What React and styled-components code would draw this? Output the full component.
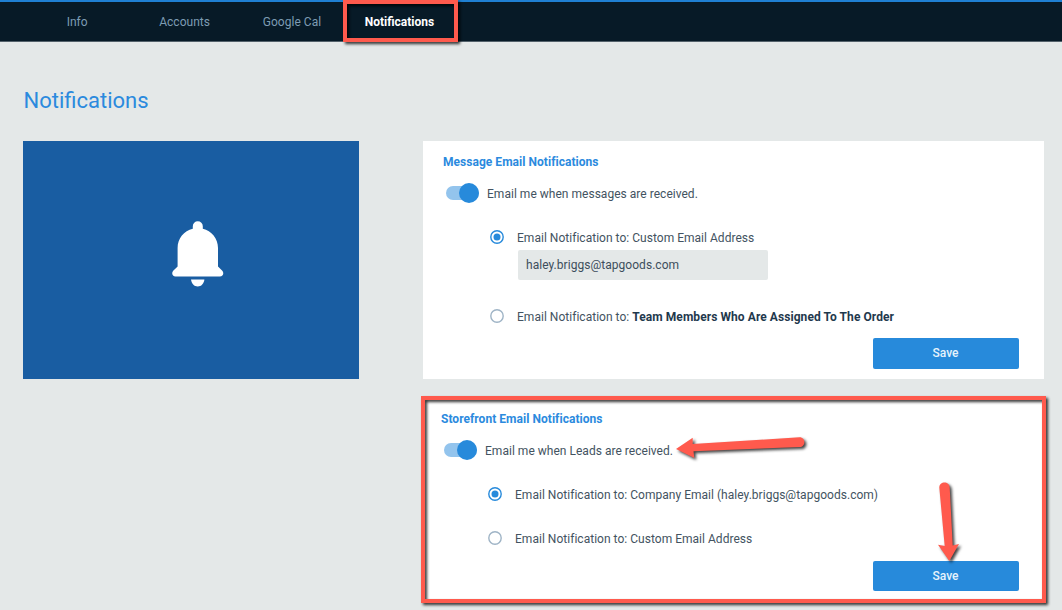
import React, { useState } from "react";
import styled, { createGlobalStyle } from "styled-components";

const GlobalStyle = createGlobalStyle`
  * {
    box-sizing: border-box;
  }
  body {
    margin: 0;
    background: #e4e8e8;
    color: #435361;
    font-family: Roboto, "Liberation Sans", sans-serif;
    font-size: 12px;
    letter-spacing: 0.025px;
    overflow: hidden;
  }
`;

const Page = styled.div`
  position: relative;
  width: 1062px;
  height: 610px;
  overflow: hidden;
`;

const Nav = styled.nav`
  display: flex;
  height: 42px;
  padding-left: 23px;
  background: #071a27;
  border-top: 2px solid #1f80d3;
  border-bottom: 1px solid #53616b;
`;

const NavItem = styled.a`
  position: relative;
  width: 107.4px;
  padding-left: 1px;
  line-height: 40px;
  text-align: center;
  font-size: 12px;
  letter-spacing: ${({ $active }) => ($active ? "0" : "0.03px")};
  font-weight: ${({ $active }) => ($active ? 700 : 400)};
  color: ${({ $active }) => ($active ? "#ffffff" : "#7d9cb3")};
`;

const Highlight = styled.div`
  position: absolute;
  inset: ${({ $inset }) => $inset};
  border: 4px solid #ff5a4d;
  filter: drop-shadow(2px 2px 1.5px rgba(0, 0, 0, 0.8));
  pointer-events: none;
`;

const Title = styled.h1`
  margin: 0;
  padding: 43px 0 0 23.5px;
  height: 99px;
  font-size: 22px;
  font-weight: 400;
  line-height: 32px;
  letter-spacing: 0;
  color: #2b8ade;
`;

const Content = styled.main`
  display: flex;
  align-items: flex-start;
  gap: 64px;
  padding-left: 23px;
`;

const IconPanel = styled.div`
  display: flex;
  align-items: center;
  justify-content: center;
  width: 336px;
  height: 238px;
  padding: 0 0 12px 13px;
  background: #195da2;
`;

const Cards = styled.div`
  display: flex;
  flex-direction: column;
  gap: 19px;
`;

const Card = styled.section`
  position: relative;
  display: flex;
  flex-direction: column;
  width: ${({ $bleed = 0 }) => 621 + $bleed}px;
  margin-left: ${({ $bleed = 0 }) => -$bleed}px;
  padding: 11px 25px 10px 20px;
  background: #ffffff;
`;

const CardTitle = styled.h2`
  margin: 0 0 11px;
  font-size: 12px;
  font-weight: 700;
  line-height: 20px;
  letter-spacing: 0.04px;
  color: #2b8ade;
`;

const ToggleRow = styled.label`
  display: flex;
  align-items: center;
  gap: 8px;
  height: 20px;
  margin-bottom: 24px;
  padding-left: 3px;
`;

const Track = styled.span`
  display: flex;
  align-items: center;
  justify-content: flex-end;
  width: 33px;
  height: 14px;
  border-radius: 7px;
  background: #93c4ed;
`;

const Knob = styled.span`
  width: 20px;
  height: 20px;
  flex: none;
  border-radius: 50%;
  background: #278adb;
`;

const Label = styled.span`
  line-height: 20px;
  padding-top: 1px;
  white-space: nowrap;

  b {
    font-weight: 700;
    letter-spacing: 0.07px;
    color: #1f394d;
  }
`;

const RadioRow = styled.label`
  display: flex;
  align-items: center;
  gap: 13px;
  height: 20px;
  margin-top: ${({ $gap }) => $gap || 0}px;
  padding-left: 47px;
`;

const EmailInput = styled.input`
  width: 250px;
  height: 30px;
  margin: 3px 0 0 75px;
  padding: 0 8px;
  border: 0;
  border-radius: 2px;
  outline: 0;
  background: #e4e8e8;
  color: #3d4e5c;
  font: inherit;
  letter-spacing: 0.04px;
`;

const SaveButton = styled.button`
  align-self: flex-end;
  width: 146px;
  height: ${({ $height }) => $height}px;
  margin-top: ${({ $gap }) => $gap}px;
  padding: 0 1px 1px 0;
  border: 0;
  border-radius: 2px;
  background: #278adb;
  color: #e6f2fc;
  font-family: inherit;
  font-size: 12px;
  font-weight: 500;
`;

const Arrows = styled.svg`
  position: absolute;
  top: 0;
  left: 0;
  pointer-events: none;
  fill: #ff5a4d;
  filter: drop-shadow(2px 2px 1.5px rgba(0, 0, 0, 0.75));
`;

const Bell = () => (
  <svg width="52" height="66" viewBox="0 0 52 66" fill="#fff">
    <path d="M20.8 5.2a5 5 0 0 1 10 0v2.6C39.500 10 46 17.500 46 27v18.600l4.300 4.200c2 2.200.8 5.700-2.500 5.700H3.500C.4 55.500-.8 52 1.200 49.800L5.600 45.600V27c0-9.500 6.400-17 15.200-19.200z" />
    <path d="M19 58.500h13.400c-.5 4.200-3.200 7-6.700 7S19.500 62.700 19 58.500z" />
  </svg>
);

const Radio = ({ checked }) => (
  <svg width="14" height="14" viewBox="0 0 14 14">
    <circle
      cx="7"
      cy="7"
      r="6.2"
      fill="none"
      stroke={checked ? "#278adb" : "#9fb4c6"}
      strokeWidth="1.4"
    />
    {checked && <circle cx="7" cy="7" r="3.5" fill="#278adb" />}
  </svg>
);

const Toggle = ({ children }) => (
  <ToggleRow>
    <Track>
      <Knob />
    </Track>
    <Label>{children}</Label>
  </ToggleRow>
);

const Option = ({ checked, gap, onSelect, children }) => (
  <RadioRow $gap={gap} onClick={onSelect}>
    <Radio checked={checked} />
    <Label>{children}</Label>
  </RadioRow>
);

const App = () => {
  const [messageTarget, setMessageTarget] = useState("custom");
  const [leadTarget, setLeadTarget] = useState("company");
  const [email, setEmail] = useState("haley.briggs@tapgoods.com");

  return (
    <Page>
      <GlobalStyle />
      <Nav>
        <NavItem>Info</NavItem>
        <NavItem>Accounts</NavItem>
        <NavItem>Google Cal</NavItem>
        <NavItem $active>
          Notifications
          <Highlight $inset="-2px -5px -1px -2px" />
        </NavItem>
      </Nav>
      <Title>Notifications</Title>
      <Content>
        <IconPanel>
          <Bell />
        </IconPanel>
        <Cards>
          <Card>
            <CardTitle>Message Email Notifications</CardTitle>
            <Toggle>Email me when messages are received.</Toggle>
            <Option
              checked={messageTarget === "custom"}
              onSelect={() => setMessageTarget("custom")}
            >
              Email Notification to: Custom Email Address
            </Option>
            <EmailInput
              value={email}
              onChange={(e) => setEmail(e.target.value)}
            />
            <Option
              gap={26}
              checked={messageTarget === "team"}
              onSelect={() => setMessageTarget("team")}
            >
              Email Notification to:{" "}
              <b>Team Members Who Are Assigned To The Order</b>
            </Option>
            <SaveButton $height={31} $gap={12}>
              Save
            </SaveButton>
          </Card>
          <Card $bleed={2}>
            <CardTitle>Storefront Email Notifications</CardTitle>
            <Toggle>Email me when Leads are received.</Toggle>
            <Option
              checked={leadTarget === "company"}
              onSelect={() => setLeadTarget("company")}
            >
              Email Notification to: Company Email (haley.briggs@tapgoods.com)
            </Option>
            <Option
              gap={24}
              checked={leadTarget === "custom"}
              onSelect={() => setLeadTarget("custom")}
            >
              Email Notification to: Custom Email Address
            </Option>
            <SaveButton $height={30} $gap={13}>
              Save
            </SaveButton>
            <Highlight $inset="-2px -2px -2px 0" />
          </Card>
        </Cards>
      </Content>
      <Arrows width="1062" height="610">
        <path d="M676 449 692.700 437.700V444L799.500 437.300C806 437.300 806 447 799.500 447L693.500 451.300 694.300 458z" />
        <path d="M949.300 561 938 544.700 944.700 546 939.300 487.500C939.300 480.700 949.500 480.700 949.700 487.500L952.700 545.500 959 544z" />
      </Arrows>
    </Page>
  );
};

export default App;
